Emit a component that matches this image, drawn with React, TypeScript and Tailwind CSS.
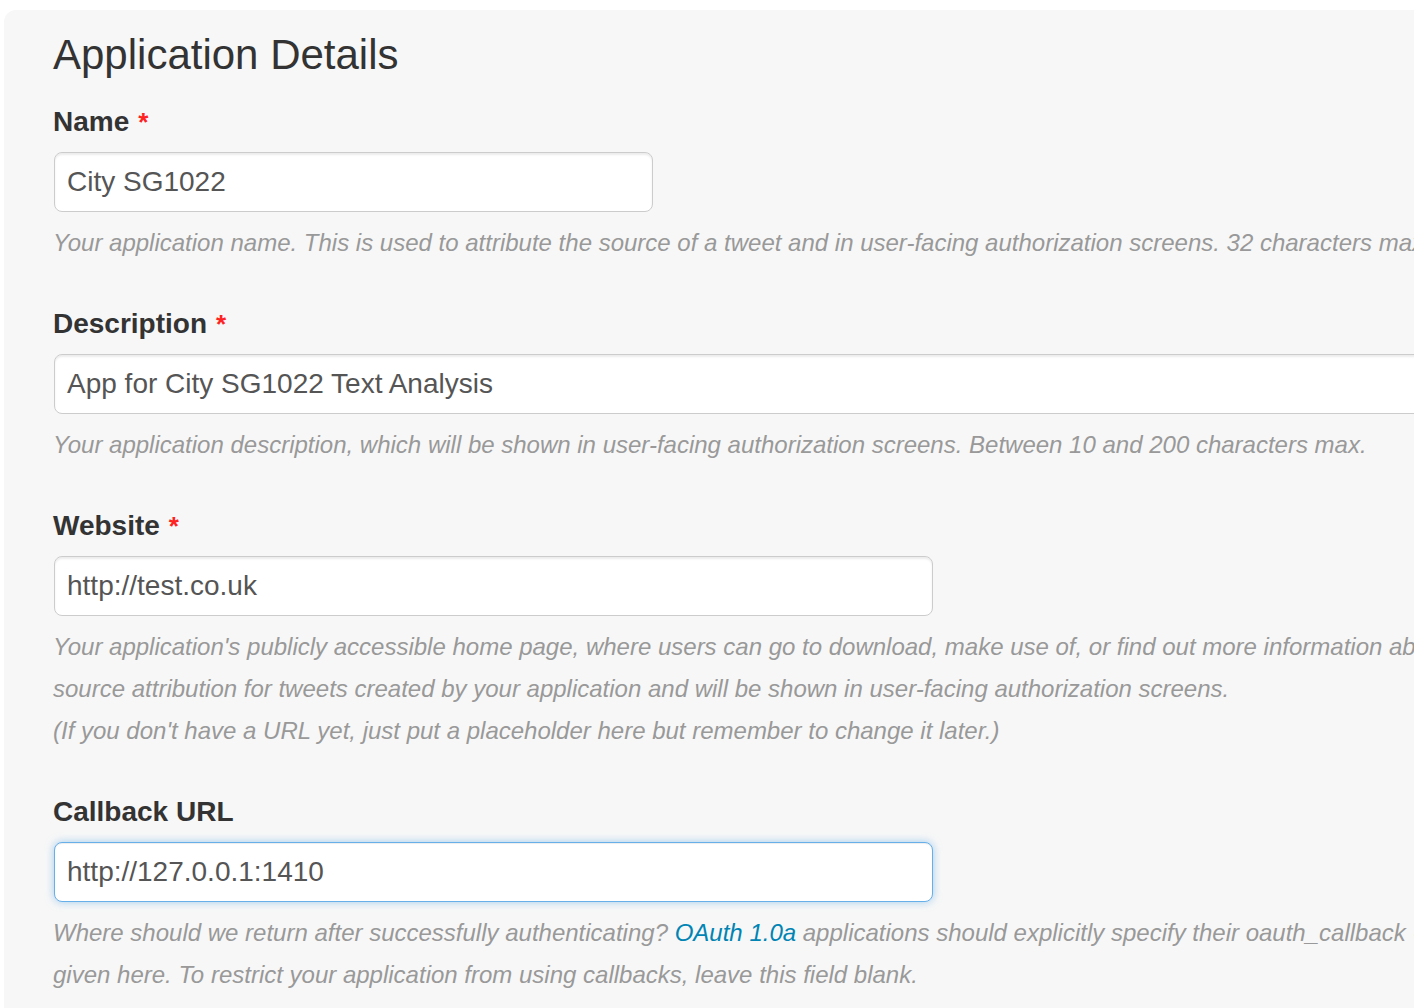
import React from 'react';

const font = "font-['Helvetica_Neue','Liberation_Sans',Arial,sans-serif]";

const Label = ({ text, required }: { text: string; required?: boolean }) => (
    <div className="h-[40px] flex items-center text-[28px] font-bold text-[#333] leading-[40px]">
        {text}
        {required && <span className="ml-[9px] text-[#f22] text-[26px]">*</span>}
    </div>
);

const Field = ({ value, width, focused }: { value: string; width: string; focused?: boolean }) => (
    <div
        className={`mt-[10px] ml-px h-[60px] flex items-center pl-[12px] bg-white rounded-[8px] border text-[28px] text-[#555] whitespace-nowrap overflow-hidden ${width} ${
            focused
                ? 'border-[#66afe9] shadow-[inset_0_1px_1px_rgba(0,0,0,0.075),0_0_8px_rgba(102,175,233,0.6)]'
                : 'border-[#ccc] shadow-[inset_0_2px_2px_rgba(0,0,0,0.075)]'
        }`}
    >
        {value}
    </div>
);

const Help = ({ children }: { children: React.ReactNode }) => (
    <div className="mt-[10px] text-[24px] italic leading-[42px] text-[#999] whitespace-nowrap">{children}</div>
);

export default function App() {
    return (
        <div className={`w-screen h-screen overflow-hidden bg-white ${font}`}>
            <div className="ml-[4px] mt-[10px] w-[1600px] h-[1100px] rounded-tl-[12px] bg-[#f7f7f7] pl-[49px] pt-[20px]">
                <h1 className="text-[42px] leading-[50px] text-[#333]">Application Details</h1>

                <div className="mt-[22px]">
                    <Label text="Name" required />
                    <Field value="City SG1022" width="w-[599px]" />
                    <Help>
                        Your application name. This is used to attribute the source of a tweet and in user-facing authorization screens. 32 characters max.
                    </Help>
                </div>

                <div className="mt-[40px]">
                    <Label text="Description" required />
                    <Field value="App for City SG1022 Text Analysis" width="w-[1450px]" />
                    <Help>
                        Your application description, which will be shown in user-facing authorization screens. Between 10 and 200 characters max.
                    </Help>
                </div>

                <div className="mt-[40px]">
                    <Label text="Website" required />
                    <Field value="http://test.co.uk" width="w-[879px]" />
                    <Help>
                        Your application's publicly accessible home page, where users can go to download, make use of, or find out more information about your application. This fully-qualified URL is used in the
                        <br />
                        source attribution for tweets created by your application and will be shown in user-facing authorization screens.
                        <br />
                        (If you don't have a URL yet, just put a placeholder here but remember to change it later.)
                    </Help>
                </div>

                <div className="mt-[40px]">
                    <Label text="Callback URL" />
                    <Field value="http://127.0.0.1:1410" width="w-[879px]" focused />
                    <Help>
                        Where should we return after successfully authenticating?{' '}
                        <a className="text-[#0084b4]">OAuth 1.0a</a> applications should explicitly specify their oauth_callback URL on the request token step, regardless of the value
                        <br />
                        given here. To restrict your application from using callbacks, leave this field blank.
                    </Help>
                </div>
            </div>
        </div>
    );
}
